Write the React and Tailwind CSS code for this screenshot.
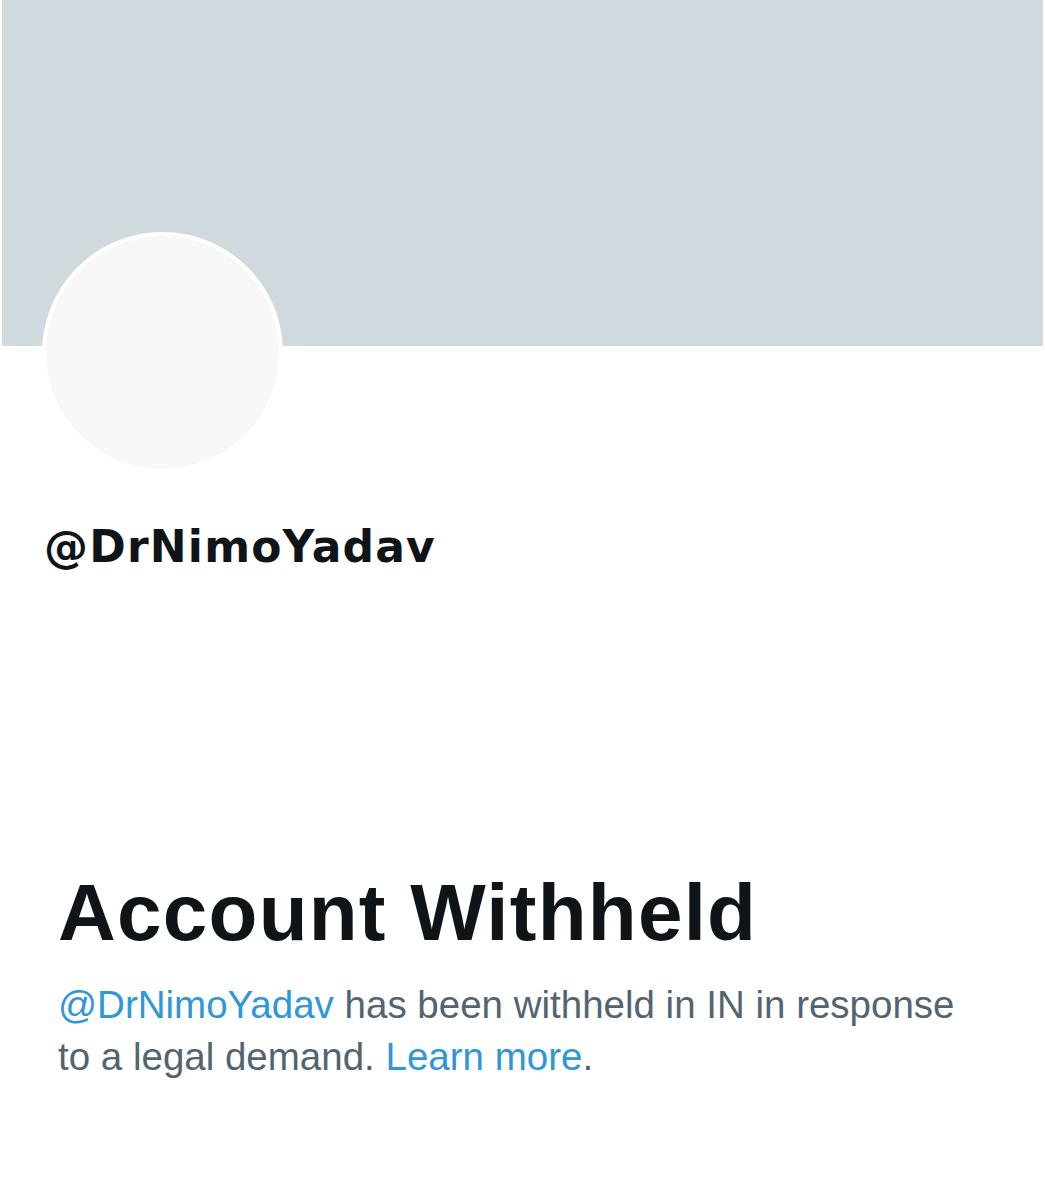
export default function App() {
  return (
    <div className="min-h-screen w-[1045px] bg-white font-['Liberation_Sans',Arial,sans-serif] text-[#0f1419]">
      {/* banner */}
      <div className="mx-[2px] h-[346px] bg-[#cfd9de]" />

      {/* avatar */}
      <div className="ml-[42px] -mt-[114px] h-[241px] w-[241px] rounded-full border-[4px] border-white bg-[#f7f9f9]" />

      {/* handle */}
      <div className="ml-[44px] mt-[46px] font-['DejaVu_Sans',sans-serif] text-[44px] font-bold leading-[56px] tracking-[1.2px]">
        @DrNimoYadav
      </div>

      {/* withheld notice */}
      <div className="ml-[58px] mt-[290px] w-[910px]">
        <h1 className="text-[80px] font-bold leading-[96px] tracking-[1.25px]">
          Account Withheld
        </h1>
        <p className="mt-[18px] text-[38.5px] leading-[52px] text-[#536471]">
          <span className="text-[#2f96d8]">@DrNimoYadav</span> has been withheld in IN in response to a legal demand.{" "}
          <span className="text-[#2f96d8]">Learn more</span>.
        </p>
      </div>
    </div>
  );
}
